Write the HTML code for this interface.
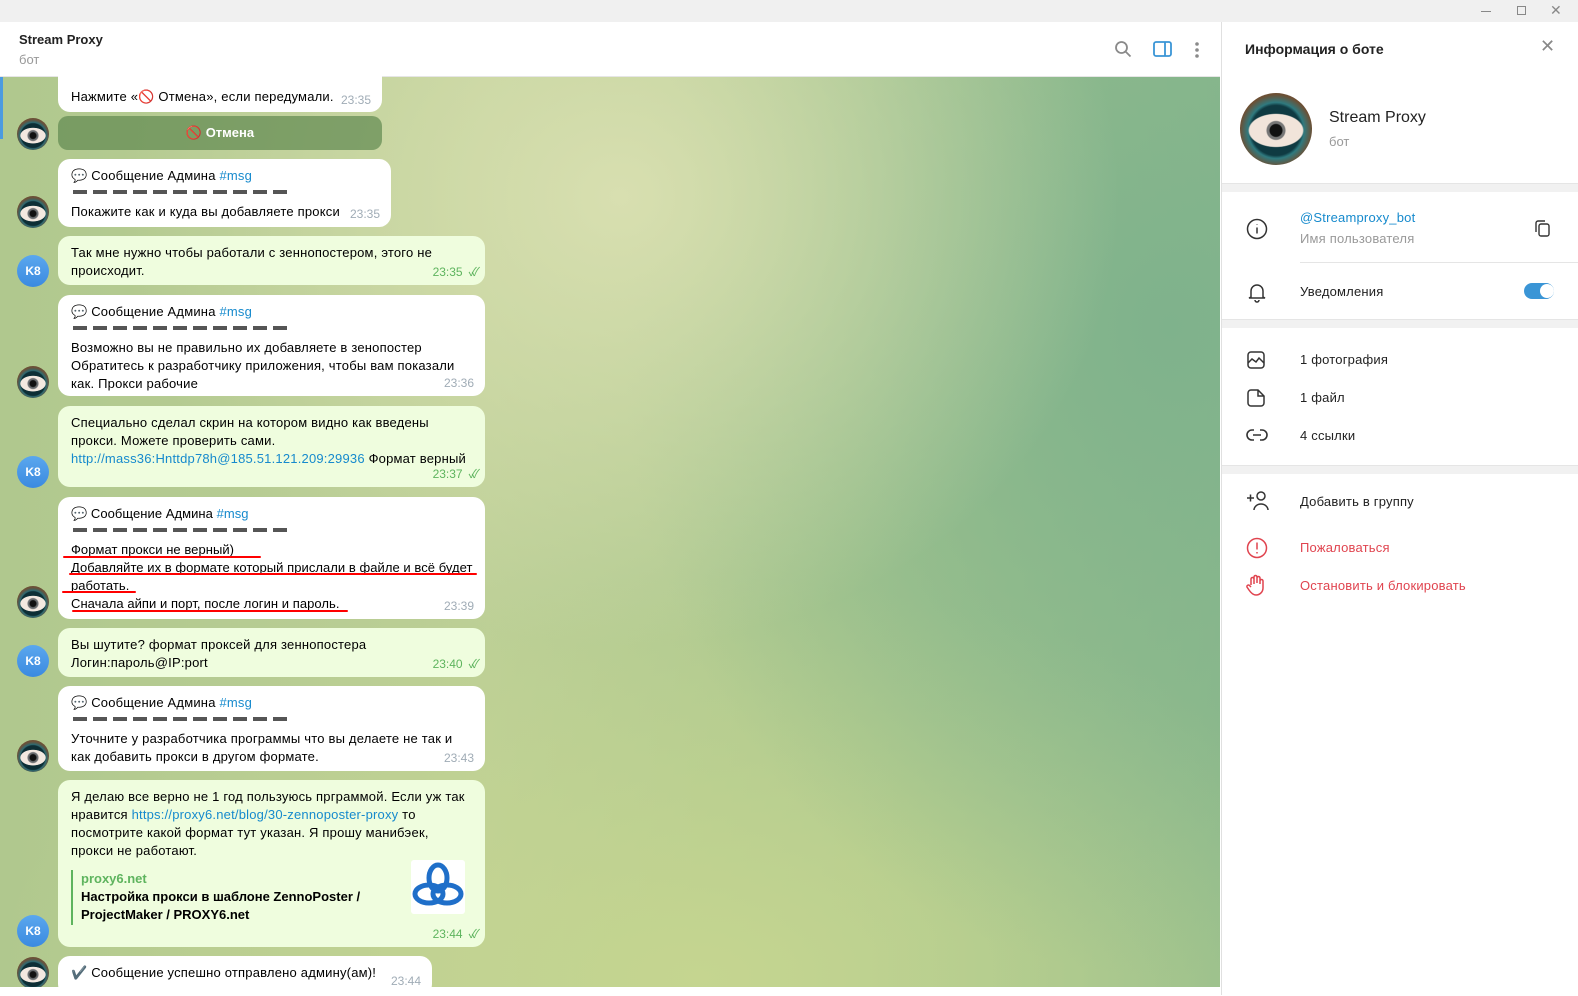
<!DOCTYPE html>
<html><head><meta charset="utf-8"><style>
*{box-sizing:border-box;margin:0;padding:0}
body{width:1578px;height:995px;overflow:hidden;font-family:"Liberation Sans","Noto Sans CJK SC",sans-serif;font-size:13px;color:#000;background:#fff;position:relative}
.tb{position:absolute;left:0;top:0;width:1578px;height:22px;background:#f0f0f0}
.hdr{position:absolute;left:0;top:22px;width:1220px;height:55px;background:#fff;border-bottom:1px solid #e6e6e6}
.chat{position:absolute;left:0;top:77px;width:1220px;height:910px;
background:radial-gradient(ellipse 500px 450px at 620px 120px,#d8dfb0 0%,rgba(216,223,176,0) 100%),
radial-gradient(ellipse 550px 650px at 1170px 250px,#7fb28c 0%,rgba(127,178,140,0) 100%),
radial-gradient(ellipse 700px 400px at 700px 900px,#c5d590 0%,rgba(197,213,144,0) 100%),
linear-gradient(90deg,#b0c88e,#bccf96 40%,#a9c78e 70%,#90bb8c)}
.b{position:absolute;left:58px;background:#fff;border-radius:12px;padding:8px 12px 0 13px;line-height:18px;letter-spacing:.2px;white-space:nowrap}
.o{background:#effdde}
.t{position:absolute;right:11px;bottom:4px;font-size:12px;color:#a0acb6;letter-spacing:0}
.o .t{color:#5eb45e;right:10px}
.ck{display:inline-block;margin-left:6px;color:#5eb45e;letter-spacing:-5px}
a,.ln{color:#168acd;text-decoration:none}
.dash{height:4px;width:214px;margin:5px 0 9px 2px;background:repeating-linear-gradient(90deg,#555 0 14px,transparent 14px 20px)}
.av{position:absolute;left:17px;width:32px;height:32px;border-radius:50%}
.eye{background:radial-gradient(circle at 50% 55%,#111 0 3px,#6a6d70 4px 5px,rgba(0,0,0,0) 6px),radial-gradient(ellipse 13px 8px at 50% 55%,#f3e8e0 0 95%,rgba(0,0,0,0) 100%),radial-gradient(circle at 50% 55%,#0d2e35 0 12px,#2d6a72 13px,#6b5138 16px)}
.k8{background:linear-gradient(#5aa7ee,#3b8ae0);color:#fff;font-size:12px;font-weight:bold;text-align:center;line-height:32px}
.ul{position:absolute;height:2px;background:#f00;border-radius:1px}
.rp{position:absolute;left:1221px;top:22px;width:357px;height:973px;background:#fff;border-left:1px solid #e0e0e0}
.sep{position:absolute;left:0;width:357px;height:9px;background:#f1f1f1;border-top:1px solid #e5e5e5}
.row{position:absolute;left:78px;font-size:13px;color:#222;letter-spacing:.2px}
.ic{position:absolute;left:24px}
</style></head><body>
<div class="tb">
<div style="position:absolute;left:1481px;top:11px;width:10px;height:1px;background:#888"></div>
<div style="position:absolute;left:1517px;top:6px;width:9px;height:9px;border:1px solid #888"></div>
<div style="position:absolute;left:1550px;top:2px;font-size:14px;color:#888">✕</div>
</div>
<div class="hdr">
<div style="position:absolute;left:19px;top:10px;font-weight:bold;font-size:13px;color:#222">Stream Proxy</div>
<div style="position:absolute;left:19px;top:30px;color:#999;font-size:13px">бот</div>
<svg style="position:absolute;left:1114px;top:18px" width="18" height="18" viewBox="0 0 18 18" fill="none" stroke="#8a8a8a" stroke-width="1.8"><circle cx="7.5" cy="7.5" r="5.5"/><path d="M11.5 11.5l5 5"/></svg>
<svg style="position:absolute;left:1153px;top:19px" width="19" height="16" viewBox="0 0 19 16" fill="none" stroke="#3a95d6" stroke-width="1.8"><rect x="1" y="1" width="17" height="14" rx="2"/><path d="M12 1v14"/></svg>
<svg style="position:absolute;left:1194px;top:19px" width="6" height="18"><circle cx="3" cy="3" r="1.8" fill="#8a8a8a"/><circle cx="3" cy="9" r="1.8" fill="#8a8a8a"/><circle cx="3" cy="15" r="1.8" fill="#8a8a8a"/></svg>
</div>
<div class="chat"></div>
<div style="position:absolute;left:0;top:77px;width:3px;height:62px;background:#4b9be0"></div>

<div class="b" style="top:70px;width:324px;height:42px;border-radius:0 0 12px 12px;padding-top:18px">Нажмите «🚫 Отмена», если передумали.<span class="t" style="bottom:3px">23:35</span></div>
<div style="position:absolute;left:58px;top:116px;width:324px;height:34px;border-radius:10px;background:rgba(98,138,82,.72);color:#fff;text-align:center;line-height:34px;font-weight:bold">🚫 Отмена</div>
<div class="av eye" style="top:118px"></div>

<div class="b" style="top:159px;width:333px;height:68px">💬 Сообщение Админа <a>#msg</a><div class="dash"></div>Покажите как и куда вы добавляете прокси<span class="t">23:35</span></div>
<div class="av eye" style="top:196px"></div>

<div class="b o" style="top:236px;width:427px;height:49px">Так мне нужно чтобы работали с зеннопостером, этого не<br>происходит.<span class="t">23:35<span class="ck">✓✓</span></span></div>
<div class="av k8" style="top:255px">K8</div>

<div class="b" style="top:295px;width:427px;height:101px">💬 Сообщение Админа <a>#msg</a><div class="dash"></div>Возможно вы не правильно их добавляете в зенопостер<br>Обратитесь к разработчику приложения, чтобы вам показали<br>как. Прокси рабочие<span class="t">23:36</span></div>
<div class="av eye" style="top:366px"></div>

<div class="b o" style="top:406px;width:427px;height:81px">Специально сделал скрин на котором видно как введены<br>прокси. Можете проверить сами.<br><a>http://mass36:Hnttdp78h@185.51.121.209:29936</a> Формат верный<span class="t">23:37<span class="ck">✓✓</span></span></div>
<div class="av k8" style="top:456px">K8</div>

<div class="b" style="top:497px;width:427px;height:122px;letter-spacing:.05px">💬 Сообщение Админа <a>#msg</a><div class="dash"></div>Формат прокси не верный)<br>Добавляйте их в формате который прислали в файле и всё будет<br>работать.<br>Сначала айпи и порт, после логин и пароль.<span class="t">23:39</span></div>
<div class="ul" style="left:63px;top:556px;width:198px"></div>
<div class="ul" style="left:69px;top:573px;width:408px"></div>
<div class="ul" style="left:62px;top:591px;width:74px"></div>
<div class="ul" style="left:72px;top:610px;width:276px"></div>
<div class="av eye" style="top:586px"></div>

<div class="b o" style="top:628px;width:427px;height:49px">Вы шутите? формат проксей для зеннопостера<br>Логин:пароль@IP:port<span class="t">23:40<span class="ck">✓✓</span></span></div>
<div class="av k8" style="top:645px">K8</div>

<div class="b" style="top:686px;width:427px;height:85px">💬 Сообщение Админа <a>#msg</a><div class="dash"></div>Уточните у разработчика программы что вы делаете не так и<br>как добавить прокси в другом формате.<span class="t">23:43</span></div>
<div class="av eye" style="top:740px"></div>

<div class="b o" style="top:780px;width:427px;height:167px">Я делаю все верно не 1 год пользуюсь прграммой. Если уж так<br>нравится <a>https://proxy6.net/blog/30-zennoposter-proxy</a> то<br>посмотрите какой формат тут указан. Я прошу манибэек,<br>прокси не работают.
<div style="margin-top:10px;border-left:2px solid #5eb45e;padding-left:8px;height:55px;position:relative;letter-spacing:0">
<div style="color:#5eb45e;font-weight:bold">proxy6.net</div>
<div style="font-weight:bold">Настройка прокси в шаблоне ZennoPoster /<br>ProjectMaker / PROXY6.net</div>
<svg style="position:absolute;left:338px;top:-10px" width="54" height="54" viewBox="0 0 54 54"><rect width="54" height="54" rx="3" fill="#fff"/><g fill="none" stroke="#1f6fc9" stroke-width="5"><ellipse cx="27" cy="18" rx="9" ry="13"/><ellipse cx="18" cy="34" rx="14" ry="9"/><ellipse cx="36" cy="34" rx="14" ry="9"/></g></svg>
</div><span class="t">23:44<span class="ck">✓✓</span></span></div>
<div class="av k8" style="top:915px">K8</div>

<div class="b" style="top:956px;width:374px;height:40px">✔️ Сообщение успешно отправлено админу(ам)!<span class="t" style="bottom:6px">23:44</span></div>
<div class="av eye" style="top:957px"></div>
<div style="position:absolute;left:0;top:987px;width:1220px;height:8px;background:#fff"></div>

<div class="rp">
<div style="position:absolute;left:23px;top:19px;font-size:14px;font-weight:bold;color:#222">Информация о боте</div>
<div style="position:absolute;left:318px;top:14px;font-size:18px;color:#888">✕</div>
<div style="position:absolute;left:18px;top:71px;width:72px;height:72px;border-radius:50%;background:radial-gradient(circle at 50% 52%,#111 0 6px,#777 7px 9px,rgba(0,0,0,0) 10px),radial-gradient(ellipse 28px 17px at 50% 52%,#f1e4da 0 95%,rgba(0,0,0,0) 100%),radial-gradient(circle at 50% 52%,#0f3a42 0 25px,#2f7a7f 28px,#6c4f34 36px)"></div>
<div style="position:absolute;left:107px;top:87px;font-size:16px;color:#222">Stream Proxy</div>
<div style="position:absolute;left:107px;top:112px;color:#999">бот</div>
<div class="sep" style="top:161px"></div>
<svg class="ic" style="top:196px" width="22" height="22" viewBox="0 0 22 22" fill="none" stroke="#333" stroke-width="1.5"><circle cx="11" cy="11" r="9.5"/><path d="M11 9.5v6M11 6.5v.5"/></svg>
<div class="row" style="top:188px"><span class="ln">@Streamproxy_bot</span></div>
<div class="row" style="top:209px;color:#999">Имя пользователя</div>
<svg style="position:absolute;left:313px;top:198px" width="15" height="17" viewBox="0 0 15 17" fill="none" stroke="#333" stroke-width="1.4"><rect x="4" y="4" width="10" height="12" rx="2"/><path d="M1 12V3a2 2 0 012-2h7"/></svg>
<div style="position:absolute;left:78px;top:240px;width:279px;height:1px;background:#e5e5e5"></div>
<svg class="ic" style="top:259px" width="22" height="22" viewBox="0 0 22 22" fill="none" stroke="#333" stroke-width="1.5"><path d="M5 16V10a6 6 0 0112 0v6l2 1H3z M9 19a2 2 0 004 0"/></svg>
<div class="row" style="top:262px">Уведомления</div>
<div style="position:absolute;left:302px;top:261px;width:30px;height:16px;border-radius:8px;background:#3a95d6"></div>
<div style="position:absolute;left:318px;top:262px;width:14px;height:14px;border-radius:50%;background:#fff"></div>
<div class="sep" style="top:297px"></div>
<svg class="ic" style="top:328px" width="20" height="20" viewBox="0 0 20 20" fill="none" stroke="#333" stroke-width="1.5"><rect x="2" y="2" width="16" height="16" rx="3"/><path d="M2 13l4-4 4 3 3-4 5 5"/></svg>
<div class="row" style="top:330px">1 фотография</div>
<svg class="ic" style="top:366px" width="20" height="20" viewBox="0 0 20 20" fill="none" stroke="#333" stroke-width="1.5"><path d="M5 2h7l6 6v7a3 3 0 01-3 3H5a3 3 0 01-3-3V5a3 3 0 013-3zM12 2v6h6"/></svg>
<div class="row" style="top:368px">1 файл</div>
<svg class="ic" style="top:406px" width="22" height="14" viewBox="0 0 22 14" fill="none" stroke="#333" stroke-width="1.6"><path d="M8 2H6a5 5 0 000 10h2M14 2h2a5 5 0 010 10h-2M7 7h8"/></svg>
<div class="row" style="top:406px">4 ссылки</div>
<div class="sep" style="top:443px"></div>
<svg class="ic" style="top:469px" width="24" height="20" viewBox="0 0 24 20" fill="none" stroke="#333" stroke-width="1.5"><path d="M1 7h7M4.5 3.5v7"/><circle cx="15" cy="5" r="4"/><path d="M8 19a7 6 0 0114 0"/></svg>
<div class="row" style="top:472px">Добавить в группу</div>
<svg class="ic" style="top:515px" width="22" height="22" viewBox="0 0 22 22" fill="none" stroke="#e0444f" stroke-width="1.5"><circle cx="11" cy="11" r="9.5"/><path d="M11 5.5v7M11 15v1.5"/></svg>
<div class="row" style="top:518px;color:#e0444f">Пожаловаться</div>
<svg class="ic" style="top:552px" width="20" height="22" viewBox="0 0 20 22" fill="none" stroke="#e0444f" stroke-width="1.5"><path d="M5 11V5a1.5 1.5 0 013 0v5M8 9V3a1.5 1.5 0 013 0v6M11 9V4a1.5 1.5 0 013 0v6M14 10V7a1.5 1.5 0 013 0v7a7 7 0 01-7 7c-3 0-5-2-7-5l-2-3a1.5 1.5 0 012.5-1.5L5 13"/></svg>
<div class="row" style="top:556px;color:#e0444f">Остановить и блокировать</div>
</div>
</body></html>
